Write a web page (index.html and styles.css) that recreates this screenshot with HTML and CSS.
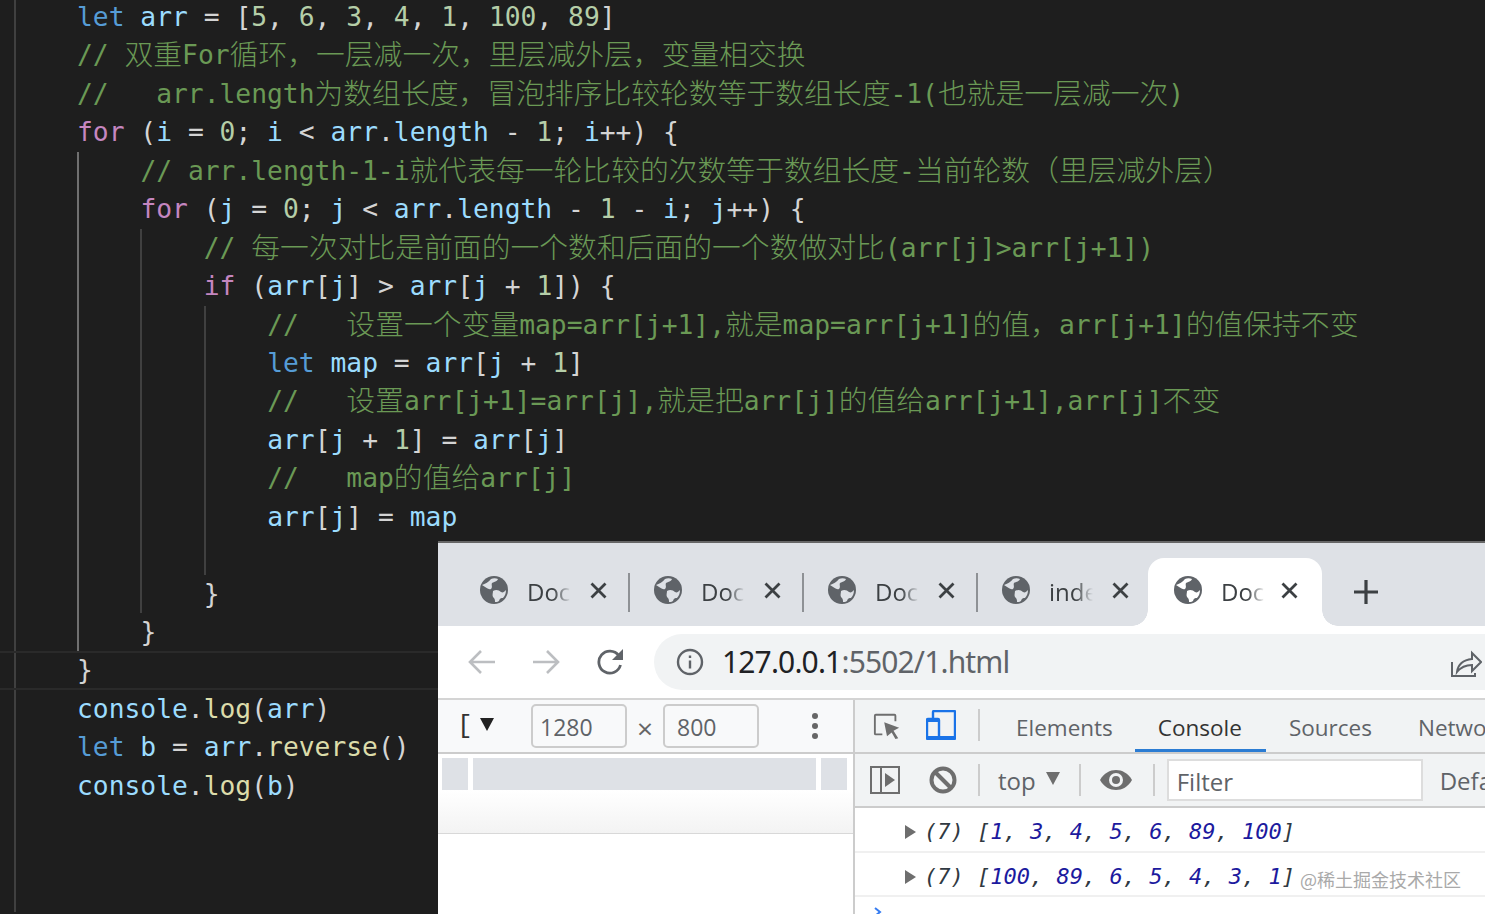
FILE: index.html
```html
<!DOCTYPE html>
<html lang="en">
<head>
    <meta charset="UTF-8">
    <title>Bubble sort</title>
    <link rel="stylesheet" href="styles.css">
</head>
<body>
    <svg class="defs" width="0" height="0">
        <symbol id="globe" viewBox="0 0 28 28">
            <circle cx="14" cy="14" r="14" fill="#5f6368"/>
            <path d="M2 9c3-1 7-3 9-6 2-1 5-1 7 0-1 3-5 3-6 4-1 2 1 4-1 6-3 1-5-2-9-4zM13 15c3-2 6-1 8 1 2 1 3 0 5-2 0 3-1 6-3 8-2 0-3 0-4 3-1 1-3 1-4 1 0-2 0-3-2-5-1-2 0-4 0-6z" fill="#dee1e6"/>
        </symbol>
        <symbol id="globe-w" viewBox="0 0 28 28">
            <circle cx="14" cy="14" r="14" fill="#5f6368"/>
            <path d="M2 9c3-1 7-3 9-6 2-1 5-1 7 0-1 3-5 3-6 4-1 2 1 4-1 6-3 1-5-2-9-4zM13 15c3-2 6-1 8 1 2 1 3 0 5-2 0 3-1 6-3 8-2 0-3 0-4 3-1 1-3 1-4 1 0-2 0-3-2-5-1-2 0-4 0-6z" fill="#fff"/>
        </symbol>
        <symbol id="close" viewBox="0 0 17 17">
            <path d="M1.500 1.500l14 14M15.500 1.500l-14 14" stroke="#3c4043" stroke-width="2.800" fill="none"/>
        </symbol>
    </svg>

    <main class="editor">
        <div class="line"><span class="k">let</span> <span class="v">arr</span> <span class="p">=</span> <span class="p">[</span><span class="n">5</span><span class="p">,</span> <span class="n">6</span><span class="p">,</span> <span class="n">3</span><span class="p">,</span> <span class="n">4</span><span class="p">,</span> <span class="n">1</span><span class="p">,</span> <span class="n">100</span><span class="p">,</span> <span class="n">89</span><span class="p">]</span></div>
        <div class="line c">// <span class="cn">双重</span>For<span class="cn">循环，一层减一次，里层减外层，变量相交换</span></div>
        <div class="line c">//   arr.length<span class="cn">为数组长度，冒泡排序比较轮数等于数组长度</span>-1(<span class="cn">也就是一层减一次</span>)</div>
        <div class="line"><span class="f">for</span> <span class="p">(</span><span class="v">i</span> <span class="p">=</span> <span class="n">0</span><span class="p">;</span> <span class="v">i</span> <span class="p">&lt;</span> <span class="v">arr</span><span class="p">.</span><span class="v">length</span> <span class="p">-</span> <span class="n">1</span><span class="p">;</span> <span class="v">i</span><span class="p">++)</span> <span class="p">{</span></div>
        <div class="block active">
            <div class="line c">// arr.length-1-i<span class="cn">就代表每一轮比较的次数等于数组长度</span>-<span class="cn">当前轮数（里层减外层）</span></div>
            <div class="line"><span class="f">for</span> <span class="p">(</span><span class="v">j</span> <span class="p">=</span> <span class="n">0</span><span class="p">;</span> <span class="v">j</span> <span class="p">&lt;</span> <span class="v">arr</span><span class="p">.</span><span class="v">length</span> <span class="p">-</span> <span class="n">1</span> <span class="p">-</span> <span class="v">i</span><span class="p">;</span> <span class="v">j</span><span class="p">++)</span> <span class="p">{</span></div>
            <div class="block">
                <div class="line c">// <span class="cn">每一次对比是前面的一个数和后面的一个数做对比</span>(arr[j]&gt;arr[j+1])</div>
                <div class="line"><span class="f">if</span> <span class="p">(</span><span class="v">arr</span><span class="p">[</span><span class="v">j</span><span class="p">]</span> <span class="p">&gt;</span> <span class="v">arr</span><span class="p">[</span><span class="v">j</span> <span class="p">+</span> <span class="n">1</span><span class="p">])</span> <span class="p">{</span></div>
                <div class="block">
                    <div class="line c">//   <span class="cn">设置一个变量</span>map=arr[j+1],<span class="cn">就是</span>map=arr[j+1]<span class="cn">的值，</span>arr[j+1]<span class="cn">的值保持不变</span></div>
                    <div class="line"><span class="k">let</span> <span class="v">map</span> <span class="p">=</span> <span class="v">arr</span><span class="p">[</span><span class="v">j</span> <span class="p">+</span> <span class="n">1</span><span class="p">]</span></div>
                    <div class="line c">//   <span class="cn">设置</span>arr[j+1]=arr[j],<span class="cn">就是把</span>arr[j]<span class="cn">的值给</span>arr[j+1],arr[j]<span class="cn">不变</span></div>
                    <div class="line"><span class="v">arr</span><span class="p">[</span><span class="v">j</span> <span class="p">+</span> <span class="n">1</span><span class="p">]</span> <span class="p">=</span> <span class="v">arr</span><span class="p">[</span><span class="v">j</span><span class="p">]</span></div>
                    <div class="line c">//   map<span class="cn">的值给</span>arr[j]</div>
                    <div class="line"><span class="v">arr</span><span class="p">[</span><span class="v">j</span><span class="p">]</span> <span class="p">=</span> <span class="v">map</span></div>
                    <div class="line">&nbsp;</div>
                </div>
                <div class="line"><span class="p">}</span></div>
            </div>
            <div class="line"><span class="p">}</span></div>
        </div>
        <div class="line current"><span class="p">}</span></div>
        <div class="line"><span class="v">console</span><span class="p">.</span><span class="m">log</span><span class="p">(</span><span class="v">arr</span><span class="p">)</span></div>
        <div class="line"><span class="k">let</span> <span class="v">b</span> <span class="p">=</span> <span class="v">arr</span><span class="p">.</span><span class="m">reverse</span><span class="p">()</span></div>
        <div class="line"><span class="v">console</span><span class="p">.</span><span class="m">log</span><span class="p">(</span><span class="v">b</span><span class="p">)</span></div>
    </main>

    <section class="browser">
        <div class="tabstrip">
            <div class="tab"><svg class="globe"><use href="#globe"/></svg><span class="tab-title">Doc</span><svg class="tab-close"><use href="#close"/></svg></div>
            <div class="tab"><svg class="globe"><use href="#globe"/></svg><span class="tab-title">Doc</span><svg class="tab-close"><use href="#close"/></svg></div>
            <div class="tab"><svg class="globe"><use href="#globe"/></svg><span class="tab-title">Doc</span><svg class="tab-close"><use href="#close"/></svg></div>
            <div class="tab last"><svg class="globe"><use href="#globe"/></svg><span class="tab-title">inde</span><svg class="tab-close"><use href="#close"/></svg></div>
            <div class="tab selected"><svg class="globe"><use href="#globe-w"/></svg><span class="tab-title">Doc</span><svg class="tab-close"><use href="#close"/></svg></div>
            <svg class="new-tab" viewBox="0 0 24 24"><path d="M12 0v24M0 12h24" stroke="#3c4043" stroke-width="3.200"/></svg>
        </div>

        <div class="toolbar">
            <svg class="nav-icon" viewBox="0 0 28 26"><path d="M27 13H3M13 2L2 13l11 11" fill="none" stroke="#bcbec1" stroke-width="2.600"/></svg>
            <svg class="nav-icon" viewBox="0 0 28 26"><path d="M1 13h24M15 2l11 11-11 11" fill="none" stroke="#bcbec1" stroke-width="2.600"/></svg>
            <svg class="nav-icon reload" viewBox="0 0 28 28"><path d="M23.500 17a11 11 0 1 1-1.800-9.500" fill="none" stroke="#5f6368" stroke-width="2.800"/><path d="M26 1v11H15z" fill="#5f6368"/></svg>
            <div class="omnibox">
                <svg class="info" viewBox="0 0 28 28"><circle cx="14" cy="14" r="12" fill="none" stroke="#5f6368" stroke-width="2.400"/><path d="M12.800 12.500h2.400v8h-2.400zM12.800 7.500h2.400v2.600h-2.400z" fill="#5f6368"/></svg>
                <span class="url"><b>127.0.0.1</b>:5502/1.html</span>
                <svg class="share" viewBox="0 0 32 30"><path d="M2 14v14h23v-3" fill="none" stroke="#5f6368" stroke-width="2"/><path d="M7 24c1-8 6-12 15-13V5l9 9-9 9v-6c-6 0-11 2-15 7z" fill="none" stroke="#5f6368" stroke-width="2"/></svg>
            </div>
        </div>

        <div class="devtools">
            <div class="device-pane">
                <div class="device-bar">
                    <span class="cut-label">[</span>
                    <span class="caret"></span>
                    <span class="size-input first">1280</span>
                    <span class="times">×</span>
                    <span class="size-input second">800</span>
                    <span class="kebab"><i></i><i></i><i></i></span>
                </div>
                <div class="ruler">
                    <div class="ruler-seg small"></div>
                    <div class="ruler-seg wide"></div>
                    <div class="ruler-seg edge"></div>
                </div>
                <div class="fade"></div>
            </div>
            <div class="tools-pane">
                <div class="tool-tabs">
                    <svg class="inspect" viewBox="0 0 30 30"><path d="M10 24H3a1 1 0 0 1-1-1V4a1 1 0 0 1 1-1h20a1 1 0 0 1 1 1v6" fill="none" stroke="#6e6e6e" stroke-width="2"/><path d="M12 11l16 6-6 3 5 8-3 1-4-7-5 4z" fill="#6e6e6e"/></svg>
                    <svg class="device" viewBox="0 0 30 30"><path d="M7 9V2a1 1 0 0 1 1-1h20a1 1 0 0 1 1 1v26a1 1 0 0 1-1 1H2a1 1 0 0 1-1-1V10a1 1 0 0 1 1-1h10a1 1 0 0 1 1 1v19" fill="none" stroke="#1a73e8" stroke-width="2.400"/><path d="M1 9h12v3H1zM1 26h28v3H1z" fill="#1a73e8"/></svg>
                    <span class="vsep"></span>
                    <span class="tool-tab">Elements</span>
                    <span class="tool-tab on">Console</span>
                    <span class="tool-tab">Sources</span>
                    <span class="tool-tab">Network</span>
                </div>
                <div class="console-bar">
                    <svg class="sidebar-icon" viewBox="0 0 30 28"><path d="M1 1h28v26H1zM11 1v26" fill="none" stroke="#6e6e6e" stroke-width="2"/><path d="M15 7l10 7-10 7z" fill="#6e6e6e"/></svg>
                    <svg class="clear-icon" viewBox="0 0 28 28"><circle cx="14" cy="14" r="11.500" fill="none" stroke="#6e6e6e" stroke-width="4"/><path d="M6 6l16 16" stroke="#6e6e6e" stroke-width="4"/></svg>
                    <span class="vsep"></span>
                    <span class="context">top</span>
                    <span class="caret gray"></span>
                    <span class="vsep"></span>
                    <svg class="eye" viewBox="0 0 32 22"><path d="M0 11C4 4 10 1 16 1s12 3 16 10c-4 7-10 10-16 10S4 18 0 11z" fill="#6e6e6e"/><circle cx="16" cy="11" r="7" fill="#f1f3f4"/><circle cx="16" cy="11" r="4" fill="#6e6e6e"/></svg>
                    <span class="vsep"></span>
                    <span class="filter">Filter</span>
                    <span class="levels">Default levels</span>
                </div>
                <div class="log-row"><span class="arrow"></span><span class="log-text">(7) <em>[</em><b>1</b>, <b>3</b>, <b>4</b>, <b>5</b>, <b>6</b>, <b>89</b>, <b>100</b><em>]</em></span></div>
                <div class="log-row"><span class="arrow"></span><span class="log-text">(7) <em>[</em><b>100</b>, <b>89</b>, <b>6</b>, <b>5</b>, <b>4</b>, <b>3</b>, <b>1</b><em>]</em></span></div>
                <svg class="prompt" viewBox="0 0 10 10"><path d="M2 1l5 4-5 4" fill="none" stroke="#367cf1" stroke-width="2"/></svg>
            </div>
        </div>
    </section>

    <div class="watermark">@稀土掘金技术社区</div>
</body>
</html>
```

FILE: styles.css
```css
html, body {
    height: 100%;
    margin: 0;
}
body {
    background-color: #1e1e1e;
    overflow: hidden;
    position: relative;
}
.defs {
    position: absolute;
}

/* editor */
.editor {
    height: 100%;
    box-sizing: border-box;
    margin-left: 14px;
    padding-left: 61px;
    border-left: 2px solid #404040;
    margin-top: -2px;
    font-family: "DejaVu Sans Mono", monospace;
    font-size: 26.3px;
    color: #6a9955;
}
.line {
    height: 38.45px;
    line-height: 38.45px;
    white-space: pre;
    color: #d4d4d4;
}
.line.c {
    color: #6a9955;
}
.line.current {
    position: relative;
}
.line.current::after {
    content: '';
    position: absolute;
    left: -77px;
    right: 0;
    top: 0;
    bottom: 0;
    border-top: 2px solid #2a2a2a;
    border-bottom: 2px solid #2a2a2a;
}
.cn {
    font-family: "Noto Sans CJK SC", sans-serif;
    font-size: 28.8px;
    font-weight: 300;
    line-height: 0;
    vertical-align: -1px;
}
.k { color: #569cd6; }
.v { color: #9cdcfe; }
.n { color: #b5cea8; }
.f { color: #c586c0; }
.m { color: #dcdcaa; }
.p { color: #d4d4d4; }
.block {
    padding-left: 61.4px;
    border-left: 2px solid #404040;
}
.block.active {
    border-left-color: #707070;
}

/* browser window on top of the editor */
.browser {
    position: absolute;
    left: 438px;
    top: 541px;
    right: 0;
    bottom: 0;
    border-top: 2px solid #666;
    background: #fff;
    font-family: "Open Sans", sans-serif;
    display: flex;
    flex-direction: column;
    overflow: hidden;
}
.tabstrip {
    height: 83px;
    flex: none;
    background: #dee1e6;
    display: flex;
    align-items: flex-end;
    padding-left: 36px;
}
.tab {
    width: 174px;
    height: 68px;
    box-sizing: border-box;
    display: flex;
    align-items: center;
    padding-left: 6px;
    padding-bottom: 4px;
    position: relative;
}
.tab::after {
    content: '';
    position: absolute;
    right: 18px;
    top: 15px;
    width: 2px;
    height: 39px;
    background: #8e9195;
}
.tab.last::after {
    display: none;
}
.tab.selected {
    background: #fff;
    border-radius: 16px 16px 0 0;
    margin-left: -22px;
    padding-left: 26px;
}
.tab.selected::before,
.tab.selected::after {
    content: '';
    position: absolute;
    top: auto;
    bottom: 0;
    width: 16px;
    height: 16px;
}
.tab.selected::before {
    left: -16px;
    background: radial-gradient(circle at 0 0, #dee1e6 15.500px, #fff 16px);
}
.tab.selected::after {
    right: -16px;
    background: radial-gradient(circle at 100% 0, #dee1e6 15.500px, #fff 16px);
}
.tab.selected .tab-close {
    margin-left: 16px;
}
.globe {
    width: 28px;
    height: 28px;
    flex: none;
}
.tab-title {
    width: 44px;
    margin-left: 19px;
    padding-top: 3px;
    overflow: hidden;
    white-space: nowrap;
    font-size: 24px;
    color: #3c4043;
    -webkit-mask-image: linear-gradient(to right, #000 60%, transparent 100%);
    mask-image: linear-gradient(to right, #000 60%, transparent 100%);
}
.tab-close {
    width: 17px;
    height: 17px;
    margin-left: 19px;
    flex: none;
}
.new-tab {
    width: 24px;
    height: 24px;
    margin-left: 32px;
    margin-bottom: 22px;
    flex: none;
}
.toolbar {
    height: 74px;
    flex: none;
    box-sizing: border-box;
    border-bottom: 2px solid #d4d4d4;
    padding: 8px 0 8px 30px;
    display: flex;
    align-items: center;
}
.nav-icon {
    width: 28px;
    height: 26px;
    margin-right: 36px;
    flex: none;
}
.nav-icon.reload {
    height: 28px;
    margin-left: 1px;
    margin-right: 29px;
}
.omnibox {
    flex: 1;
    height: 56px;
    background: #f1f3f4;
    border-radius: 28px 0 0 28px;
    display: flex;
    align-items: center;
    padding-left: 22px;
    position: relative;
}
.info {
    width: 28px;
    height: 28px;
    flex: none;
}
.url {
    margin-left: 18px;
    margin-bottom: 2px;
    font-family: "Noto Sans", "Open Sans", sans-serif;
    font-size: 30px;
    letter-spacing: -0.85px;
    color: #5f6368;
}
.url b {
    font-weight: 400;
    color: #202124;
}
.share {
    position: absolute;
    right: 3px;
    top: 14px;
    width: 32px;
    height: 30px;
}
.devtools {
    flex: 1;
    display: flex;
    min-height: 0;
}
.device-pane {
    width: 417px;
    flex: none;
    box-sizing: border-box;
    border-right: 2px solid #ccc;
    display: flex;
    flex-direction: column;
}
.device-bar {
    height: 54px;
    flex: none;
    box-sizing: border-box;
    background: #f8f9fa;
    border-bottom: 2px solid #ccc;
    display: flex;
    align-items: center;
    padding-left: 19px;
    color: #5f6368;
    font-size: 23px;
}
.cut-label {
    font-family: "Liberation Mono", monospace;
    color: #333;
    width: 23px;
    font-size: 26px;
}
.caret {
    width: 0;
    height: 0;
    border-left: 7px solid transparent;
    border-right: 7px solid transparent;
    border-top: 13px solid #222;
    margin-bottom: 4px;
}
.caret.gray {
    border-top-color: #6e6e6e;
    margin: 0 19px 4px 10px;
}
.size-input {
    width: 96px;
    height: 44px;
    box-sizing: border-box;
    border: 2px solid #ccc;
    border-radius: 5px;
    padding-left: 7px;
    line-height: 42px;
    color: #5f6368;
}
.size-input.first {
    margin-left: 37px;
}
.size-input.second {
    padding-left: 12px;
}
.times {
    width: 36px;
    text-align: center;
    padding-top: 4px;
    font-size: 28px;
    line-height: 30px;
    color: #666;
}
.kebab {
    margin-left: 53px;
    display: flex;
    flex-direction: column;
    gap: 4px;
}
.kebab i {
    width: 6px;
    height: 6px;
    border-radius: 50%;
    background: #666;
}
.ruler {
    height: 32px;
    flex: none;
    margin: 4px 4px 0 4px;
    display: flex;
    gap: 5px;
}
.ruler-seg {
    background: #dee1e6;
}
.ruler-seg.small { width: 26px; }
.ruler-seg.wide { width: 343px; }
.ruler-seg.edge { width: 26px; }
.fade {
    height: 44px;
    flex: none;
    box-sizing: border-box;
    background: linear-gradient(#fff, #f3f3f3);
    border-bottom: 1px solid #d8d8d8;
}
.tools-pane {
    flex: 1;
    min-width: 0;
    position: relative;
    overflow: hidden;
}
.tool-tabs {
    height: 54px;
    box-sizing: border-box;
    background: #f1f3f4;
    border-bottom: 2px solid #ccc;
    display: flex;
    align-items: center;
    padding-left: 18px;
    white-space: nowrap;
}
.inspect {
    width: 28px;
    height: 28px;
    flex: none;
}
.device {
    width: 30px;
    height: 30px;
    flex: none;
    margin-left: 25px;
    margin-bottom: 3px;
}
.vsep {
    width: 2px;
    height: 32px;
    background: #ccc;
    flex: none;
}
.tool-tabs .vsep {
    margin-left: 22px;
    margin-bottom: 3px;
}
.tool-tab {
    height: 52px;
    box-sizing: border-box;
    padding: 2px 23px 0;
    line-height: 52px;
    font-size: 22.500px;
    color: #5f6368;
    flex: none;
}
.vsep + .tool-tab {
    margin-left: 13px;
}
.tool-tab.on {
    color: #333;
    margin-left: -1px;
    padding-right: 24px;
    border-bottom: 3px solid #2b7cd3;
}
.console-bar {
    height: 54px;
    box-sizing: border-box;
    background: #f1f3f4;
    border-bottom: 2px solid #ccc;
    display: flex;
    align-items: center;
    padding-left: 15px;
    white-space: nowrap;
    color: #5f6368;
    font-size: 24px;
}
.sidebar-icon {
    width: 30px;
    height: 28px;
    flex: none;
}
.clear-icon {
    width: 28px;
    height: 28px;
    margin-left: 29px;
    margin-right: 21px;
    flex: none;
}
.context {
    margin-left: 18px;
}
.eye {
    width: 32px;
    height: 22px;
    margin-left: 19px;
    margin-right: 21px;
    flex: none;
}
.filter {
    width: 256px;
    height: 42px;
    box-sizing: border-box;
    margin-left: 12px;
    border: 2px solid #ddd;
    background: #fff;
    padding-left: 8px;
    line-height: 42px;
    flex: none;
}
.levels {
    margin-left: 17px;
}
.log-row {
    box-sizing: border-box;
    height: 45px;
    border-bottom: 2px solid #f0f0f0;
    display: flex;
    align-items: center;
    padding-left: 50px;
    padding-top: 4px;
}
.log-row + .log-row {
    height: 44px;
    padding-top: 5px;
}
.arrow {
    width: 0;
    height: 0;
    border-top: 7px solid transparent;
    border-bottom: 7px solid transparent;
    border-left: 11px solid #6e6e6e;
}
.log-text {
    margin-left: 8px;
    font-family: "DejaVu Sans Mono", monospace;
    font-style: italic;
    font-size: 22px;
    color: #303942;
    white-space: pre;
}
.log-text b {
    font-weight: 400;
    color: #1c1a9e;
}
.log-text em {
    font-style: italic;
}
.prompt {
    position: absolute;
    left: 18px;
    top: 207px;
    width: 10px;
    height: 10px;
}
.watermark {
    position: absolute;
    left: 1300px;
    top: 866px;
    font-family: "Noto Sans CJK SC", sans-serif;
    font-size: 18px;
    line-height: 26px;
    color: #a9a9a9;
    white-space: nowrap;
}
```
